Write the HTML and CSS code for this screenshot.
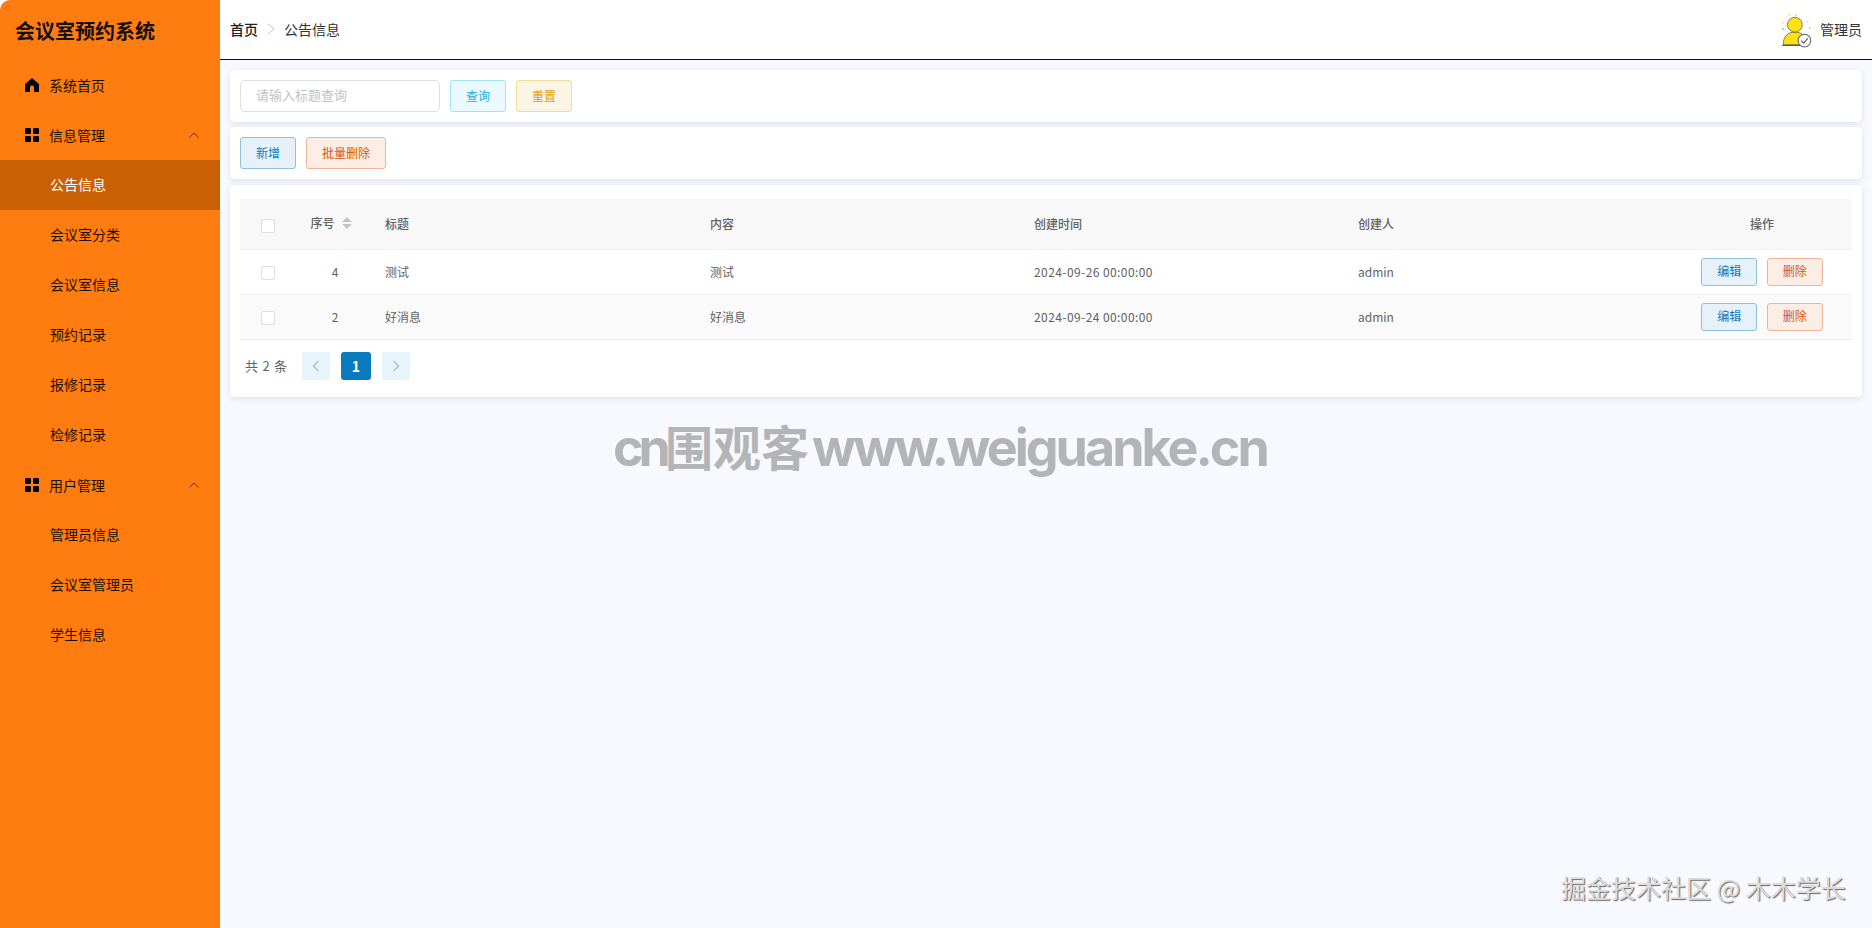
FILE: index.html
```html
<!DOCTYPE html>
<html lang="zh-CN">
<head>
    <meta charset="UTF-8">
    <meta name="viewport" content="width=device-width, initial-scale=1.0">
    <title>会议室预约系统 - 公告信息</title>
    <link rel="stylesheet" href="styles.css">
</head>
<body>
    <div class="manager">
        <div class="sidebar">
            <div class="logo">会议室预约系统</div>
            <a class="menu-item">
                <svg class="menu-icon" viewBox="0 0 14 14"><path d="M7 0 L14 6 V14 H9 V9.5 A2 2 0 0 0 5 9.5 V14 H0 V6 Z" fill="#000"/></svg>
                系统首页
            </a>
            <a class="menu-item">
                <svg class="menu-icon" viewBox="0 0 14 14"><rect width="6" height="6" rx="1"/><rect x="8" width="6" height="6" rx="1"/><rect y="8" width="6" height="6" rx="1"/><rect x="8" y="8" width="6" height="6" rx="1"/></svg>
                信息管理
                <svg class="menu-arrow" viewBox="0 0 10 6"><path d="M0.5 5.5 L5 1 L9.5 5.5" fill="none" stroke="#5a3000" stroke-width="1"/></svg>
            </a>
            <a class="menu-item sub active">公告信息</a>
            <a class="menu-item sub">会议室分类</a>
            <a class="menu-item sub">会议室信息</a>
            <a class="menu-item sub">预约记录</a>
            <a class="menu-item sub">报修记录</a>
            <a class="menu-item sub">检修记录</a>
            <a class="menu-item">
                <svg class="menu-icon" viewBox="0 0 14 14"><rect width="6" height="6" rx="1"/><rect x="8" width="6" height="6" rx="1"/><rect y="8" width="6" height="6" rx="1"/><rect x="8" y="8" width="6" height="6" rx="1"/></svg>
                用户管理
                <svg class="menu-arrow" viewBox="0 0 10 6"><path d="M0.5 5.5 L5 1 L9.5 5.5" fill="none" stroke="#5a3000" stroke-width="1"/></svg>
            </a>
            <a class="menu-item sub">管理员信息</a>
            <a class="menu-item sub">会议室管理员</a>
            <a class="menu-item sub">学生信息</a>
        </div>

        <div class="right">
            <div class="header">
                <div class="breadcrumb">
                    <span class="crumb-home">首页</span>
                    <svg class="crumb-sep" viewBox="0 0 8 12"><path d="M1 1 L7 6 L1 11" fill="none" stroke="#c0c4cc" stroke-width="1"/></svg>
                    <span>公告信息</span>
                </div>
                <div class="user">
                    <svg class="avatar" viewBox="0 0 32 34">
                        <circle cx="9" cy="2.5" r="1.1" fill="#f3e27a"/>
                        <circle cx="15" cy="3" r="1.2" fill="#f3e27a"/>
                        <circle cx="3" cy="10" r="1" fill="#f3e27a"/>
                        <circle cx="3" cy="16" r="1.2" fill="#8fdcd0"/>
                        <circle cx="26" cy="9" r="1" fill="#f3e27a"/>
                        <circle cx="28" cy="15" r="1" fill="#f6c9c9"/>
                        <path d="M3 31 C3 22 8 19 14 19 C20 19 25 22 25 31 Z" fill="#fbe115" stroke="#444" stroke-width="0.6"/>
                        <circle cx="14" cy="12" r="7" fill="#fbe115" stroke="#444" stroke-width="0.6"/>
                        <path d="M2 31.5 H20" stroke="#222" stroke-width="0.8"/>
                        <circle cx="23" cy="27" r="6" fill="#fff" stroke="#666" stroke-width="1"/>
                        <path d="M20 27 L22.4 29.4 L26.2 25" fill="none" stroke="#555" stroke-width="1"/>
                    </svg>
                    <span class="user-name">管理员</span>
                </div>
            </div>

            <div class="content">
                <div class="card search-bar">
                    <input class="search-input" type="text" placeholder="请输入标题查询">
                    <button class="btn btn-info">查询</button>
                    <button class="btn btn-warning">重置</button>
                </div>
                <div class="card action-bar">
                    <button class="btn btn-primary">新增</button>
                    <button class="btn btn-danger btn-wide">批量删除</button>
                </div>
                <div class="card table-card">
                    <table class="data-table">
                        <colgroup>
                            <col class="col-check">
                            <col class="col-index">
                            <col class="col-title">
                            <col class="col-text">
                            <col class="col-text">
                            <col class="col-text">
                            <col class="col-action">
                        </colgroup>
                        <thead>
                            <tr>
                                <th class="center"><span class="checkbox"></span></th>
                                <th class="center">
                                    <span class="index-head">序号<span class="sort-caret"><i class="caret-up"></i><i class="caret-down"></i></span></span>
                                </th>
                                <th>标题</th>
                                <th>内容</th>
                                <th>创建时间</th>
                                <th>创建人</th>
                                <th class="center">操作</th>
                            </tr>
                        </thead>
                        <tbody>
                            <tr>
                                <td class="center"><span class="checkbox"></span></td>
                                <td class="center">4</td>
                                <td>测试</td>
                                <td>测试</td>
                                <td class="date">2024-09-26 00:00:00</td>
                                <td>admin</td>
                                <td class="center">
                                    <button class="btn btn-primary btn-small">编辑</button>
                                    <button class="btn btn-danger btn-small">删除</button>
                                </td>
                            </tr>
                            <tr class="striped">
                                <td class="center"><span class="checkbox"></span></td>
                                <td class="center">2</td>
                                <td>好消息</td>
                                <td>好消息</td>
                                <td class="date">2024-09-24 00:00:00</td>
                                <td>admin</td>
                                <td class="center">
                                    <button class="btn btn-primary btn-small">编辑</button>
                                    <button class="btn btn-danger btn-small">删除</button>
                                </td>
                            </tr>
                        </tbody>
                    </table>
                    <div class="pagination">
                        <span class="total">共 2 条</span>
                        <span class="page-btn">
                            <svg viewBox="0 0 8 12"><path d="M6.5 1 L1.5 6 L6.5 11" fill="none" stroke="#b4bcc4" stroke-width="1.4"/></svg>
                        </span>
                        <span class="page-num">1</span>
                        <span class="page-btn">
                            <svg viewBox="0 0 8 12"><path d="M1.5 1 L6.5 6 L1.5 11" fill="none" stroke="#b4bcc4" stroke-width="1.4"/></svg>
                        </span>
                    </div>
                </div>
            </div>
        </div>
    </div>

    <div class="mark-site"><span class="mark-cn">cn</span><span class="mark-name">围观客</span><span class="mark-url">www.weiguanke.cn</span></div>
    <div class="mark-juejin">掘金技术社区 @ 木木学长</div>
</body>
</html>
```

FILE: styles.css
```css
* {
    box-sizing: border-box;
}
body {
    margin: 0;
    padding: 0;
    font-family: "Noto Sans CJK SC", "Noto Sans", sans-serif;
    font-size: 14px;
    color: #333;
    background-color: #f8f9fe;
}
.manager {
    display: flex;
    height: 928px;
    overflow: hidden;
}

/* sidebar */
.sidebar {
    width: 220px;
    flex-shrink: 0;
    background: #ff7d10;
    color: #1a1000;
    border-top-left-radius: 10px;
}
.logo {
    height: 60px;
    padding-left: 15px;
    line-height: 62px;
    font-size: 20px;
    font-weight: 700;
    color: #111;
}
.menu-item {
    display: flex;
    align-items: center;
    height: 50px;
    padding: 0 21px 0 25px;
}
.menu-item.sub {
    padding: 0 21px 2px 50px;
}
.menu-item.active {
    background: #c96004;
    color: #fff;
}
.menu-icon {
    width: 14px;
    height: 14px;
    margin-right: 10px;
}
.menu-arrow {
    width: 10px;
    height: 6px;
    margin-left: auto;
}

/* header */
.right {
    flex: 1;
    min-width: 0;
}
.header {
    display: flex;
    align-items: center;
    justify-content: space-between;
    height: 60px;
    padding: 0 10px;
    background: #fff;
    border-bottom: 1px solid #111;
}
.breadcrumb {
    display: flex;
    align-items: center;
    padding-bottom: 2px;
    color: #333;
}
.crumb-home {
    color: #222;
    font-weight: 500;
}
.crumb-sep {
    width: 8px;
    height: 12px;
    margin: 1px 9px 0 9px;
}
.user {
    display: flex;
    align-items: center;
    color: #333;
}
.user-name {
    padding-bottom: 2px;
}
.avatar {
    width: 34px;
    height: 36px;
    margin-right: 6px;
}

/* content */
.content {
    padding: 10px;
}
.card {
    background: #fff;
    border-radius: 5px;
    box-shadow: 0 2px 6px rgba(100, 110, 140, 0.16);
    margin-bottom: 5px;
}
.search-bar, .action-bar {
    display: flex;
    align-items: center;
    gap: 10px;
    padding: 10px;
}
.search-input {
    width: 200px;
    height: 32px;
    padding: 0 15px 3px;
    border: 1px solid #dcdfe6;
    border-radius: 5px;
    font-family: inherit;
    font-size: 13px;
    outline: none;
}
.search-input::placeholder {
    color: #bfc2c8;
}
.btn {
    width: 56px;
    height: 32px;
    padding: 0 0 2px;
    border: 1px solid;
    border-radius: 3px;
    font-family: inherit;
    font-size: 12px;
    cursor: pointer;
}
.btn-wide {
    width: 80px;
}
.btn-small {
    height: 28px;
}
.btn-small + .btn-small {
    margin-left: 7px;
}
.btn-primary {
    color: #0c7bbd;
    background: #e6f1fa;
    border-color: #8dbfdf;
}
.btn-danger {
    color: #d2570f;
    background: #fdeee5;
    border-color: #efb497;
}
.btn-info {
    color: #27aed6;
    background: #e9f9fd;
    border-color: #a6e3f2;
}
.btn-warning {
    color: #d9a214;
    background: #faf5e5;
    border-color: #eedc9f;
}

/* table */
.table-card {
    margin-top: 6px;
    padding: 14px 10px 17px;
}
.data-table {
    width: 1612px;
    table-layout: fixed;
    border-collapse: collapse;
    font-size: 12px;
    color: #606266;
}
.col-check {
    width: 55px;
}
.col-index {
    width: 80px;
}
.col-title {
    width: 325px;
}
.col-text {
    width: 324px;
}
.col-action {
    width: 180px;
}
.data-table th, .data-table td {
    padding: 0 10px;
    text-align: left;
    border-bottom: 1px solid #ebeef5;
}
.data-table th {
    height: 50px;
    background: #f8f8f8;
    color: #606266;
    font-weight: 500;
}
.data-table td {
    height: 45px;
}
.data-table .center {
    text-align: center;
}
.data-table .date {
    letter-spacing: 0.42px;
}
.striped td {
    background: #fafafa;
}
.checkbox {
    display: inline-block;
    width: 14px;
    height: 14px;
    background: #fff;
    border: 1px solid #dcdfe6;
    border-radius: 2px;
    vertical-align: middle;
}
.index-head {
    display: inline-flex;
    align-items: center;
    vertical-align: 2px;
    margin-left: -8px;
}
.sort-caret {
    display: inline-flex;
    flex-direction: column;
    gap: 2px;
    margin-left: 7px;
    margin-top: 1px;
}
.caret-up, .caret-down {
    display: block;
    width: 0;
    height: 0;
    border-left: 5px solid transparent;
    border-right: 5px solid transparent;
}
.caret-up {
    border-bottom: 5px solid #c0c4cc;
}
.caret-down {
    border-top: 5px solid #c0c4cc;
}

/* pagination */
.pagination {
    display: flex;
    align-items: center;
    height: 28px;
    margin-top: 12px;
    padding-left: 5px;
    font-size: 13px;
    word-spacing: 1.5px;
    color: #606266;
}
.total {
    width: 57px;
}
.page-btn {
    display: flex;
    align-items: center;
    justify-content: center;
    width: 28px;
    height: 28px;
    background: #e6f5fa;
    border-radius: 2px;
}
.page-btn svg {
    width: 8px;
    height: 12px;
}
.page-num {
    width: 30px;
    height: 28px;
    margin: 0 11px;
    background: #0a7abf;
    color: #fff;
    border-radius: 3px;
    font-size: 14px;
    font-weight: 700;
    line-height: 28px;
    text-align: center;
}

/* image watermarks over the page */
.mark-site {
    position: absolute;
    left: 613px;
    top: 416px;
    display: flex;
    align-items: baseline;
    font-family: Inter, "Noto Sans CJK SC", sans-serif;
    font-weight: 700;
    line-height: 64px;
    color: #b3b4b6;
    white-space: nowrap;
}
.mark-cn {
    width: 52px;
    font-size: 52px;
    letter-spacing: -5px;
}
.mark-name {
    font-size: 48px;
    margin-right: 3px;
}
.mark-url {
    font-size: 52px;
    letter-spacing: -3px;
}
.mark-juejin {
    position: absolute;
    left: 1561px;
    top: 869px;
    font-size: 25px;
    line-height: 36px;
    color: #dcdcdc;
    text-shadow: 1px 1px 1px #666;
    white-space: nowrap;
}
```
